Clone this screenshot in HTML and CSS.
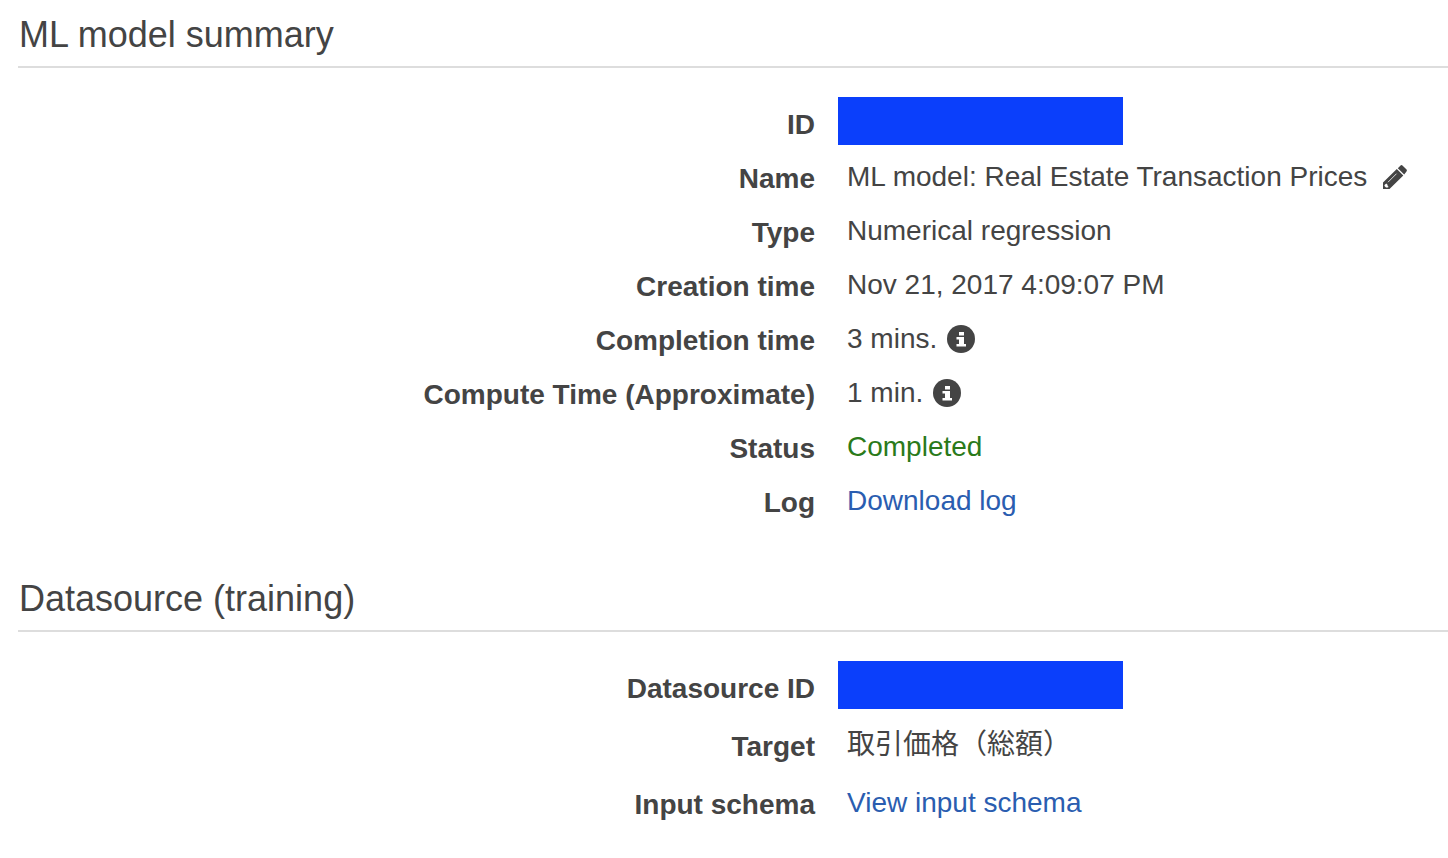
FILE: index.html
```html
<!DOCTYPE html>
<html lang="en">
<head>
<meta charset="utf-8">
<meta name="viewport" content="width=device-width, initial-scale=1">
<title>ML model summary</title>
<link rel="stylesheet" href="styles.css">
</head>
<body>
<main class="page">
  <section class="panel">
    <h2 class="panel-title">ML model summary</h2>
    <dl class="details">
      <dt class="label">ID</dt>
      <dd class="value id-value"><span class="redacted"></span></dd>
      <dt class="label">Name</dt>
      <dd class="value">ML model: Real Estate Transaction Prices
        <button class="icon-button edit" type="button" aria-label="Edit name"><svg class="pencil" viewBox="0 0 24 24" aria-hidden="true"><path fill="currentColor" d="M0 24V17.500L13.800 4l6.500 6.500L6.500 24zM14.800 3.200l2.500-2.500q1.200-1.200 2.400 0l3.600 3.600q1.200 1.200 0 2.400L21.200 9.500z"/><path fill="#fff" d="M1.500 20l1.800-1.500 1.200 1.200.2 1.300 1 1L4.500 22.500H3L1.500 21z"/><path stroke="#fff" stroke-width=".8" d="M5 17.200l8.500-8.500"/></svg></button></dd>
      <dt class="label">Type</dt>
      <dd class="value">Numerical regression</dd>
      <dt class="label">Creation time</dt>
      <dd class="value">Nov 21, 2017 4:09:07 PM</dd>
      <dt class="label">Completion time</dt>
      <dd class="value">3 mins.
        <button class="icon-button" type="button" aria-label="About completion time"><svg class="info" viewBox="0 0 28 28" aria-hidden="true"><circle cx="14" cy="14" r="14" fill="currentColor"/><path fill="#fff" d="M12 7h5v3.500h-5zM9.500 12H17v7h2v2.500H9.500V19H12v-4.500H9.500z"/></svg></button></dd>
      <dt class="label">Compute Time (Approximate)</dt>
      <dd class="value">1 min.
        <button class="icon-button" type="button" aria-label="About compute time"><svg class="info" viewBox="0 0 28 28" aria-hidden="true"><circle cx="14" cy="14" r="14" fill="currentColor"/><path fill="#fff" d="M12 7h5v3.500h-5zM9.500 12H17v7h2v2.500H9.500V19H12v-4.500H9.500z"/></svg></button></dd>
      <dt class="label">Status</dt>
      <dd class="value completed">Completed</dd>
      <dt class="label">Log</dt>
      <dd class="value"><a class="link" href="#log">Download log</a></dd>
    </dl>
  </section>
  <section class="panel">
    <h2 class="panel-title">Datasource (training)</h2>
    <dl class="details roomy">
      <dt class="label">Datasource ID</dt>
      <dd class="value id-value"><span class="redacted"></span></dd>
      <dt class="label">Target</dt>
      <dd class="value" lang="ja">取引価格（総額）</dd>
      <dt class="label">Input schema</dt>
      <dd class="value"><a class="link" href="#schema">View input schema</a></dd>
    </dl>
  </section>
</main>
</body>
</html>
```
FILE: styles.css
```css
* { box-sizing: border-box; }
body {
  margin: 0;
  background: #fff;
  color: #444;
  font-family: "Liberation Sans", "Noto Sans CJK JP", Arial, sans-serif;
  font-size: 28px;
  line-height: 34px;
}
.page { padding-left: 18px; }
.panel { margin-bottom: 36px; }
.panel-title {
  margin: 0;
  padding: 13px 1px 9px;
  border-bottom: 2px solid #ddd;
  font-size: 36px;
  font-weight: 400;
  line-height: 44px;
}
.details {
  display: grid;
  grid-template-columns: 797px minmax(0, 1fr);
  column-gap: 32px;
  grid-auto-rows: 54px;
  align-items: center;
  margin: 0;
  padding-top: 28px;
}
.roomy { grid-auto-rows: 58px; padding-top: 26px; }
.label { padding-top: 4px; text-align: right; font-weight: 700; }
.value {
  display: flex;
  align-items: center;
  gap: 10px;
  margin: 0;
  white-space: nowrap;
}
.id-value { padding-bottom: 4px; }
.redacted {
  width: 285px;
  height: 48px;
  margin-left: -9px;
  background: #0b3ffb;
}
.icon-button {
  display: flex;
  padding: 0;
  border: 0;
  background: none;
  color: #444;
  cursor: pointer;
}
.edit { margin-left: 6px; }
.pencil { width: 24px; height: 24px; }
.info { width: 28px; height: 28px; }
.completed { color: #2a7a1a; }
.link { color: #2a5db0; text-decoration: none; }
.link:hover { text-decoration: underline; }
```
